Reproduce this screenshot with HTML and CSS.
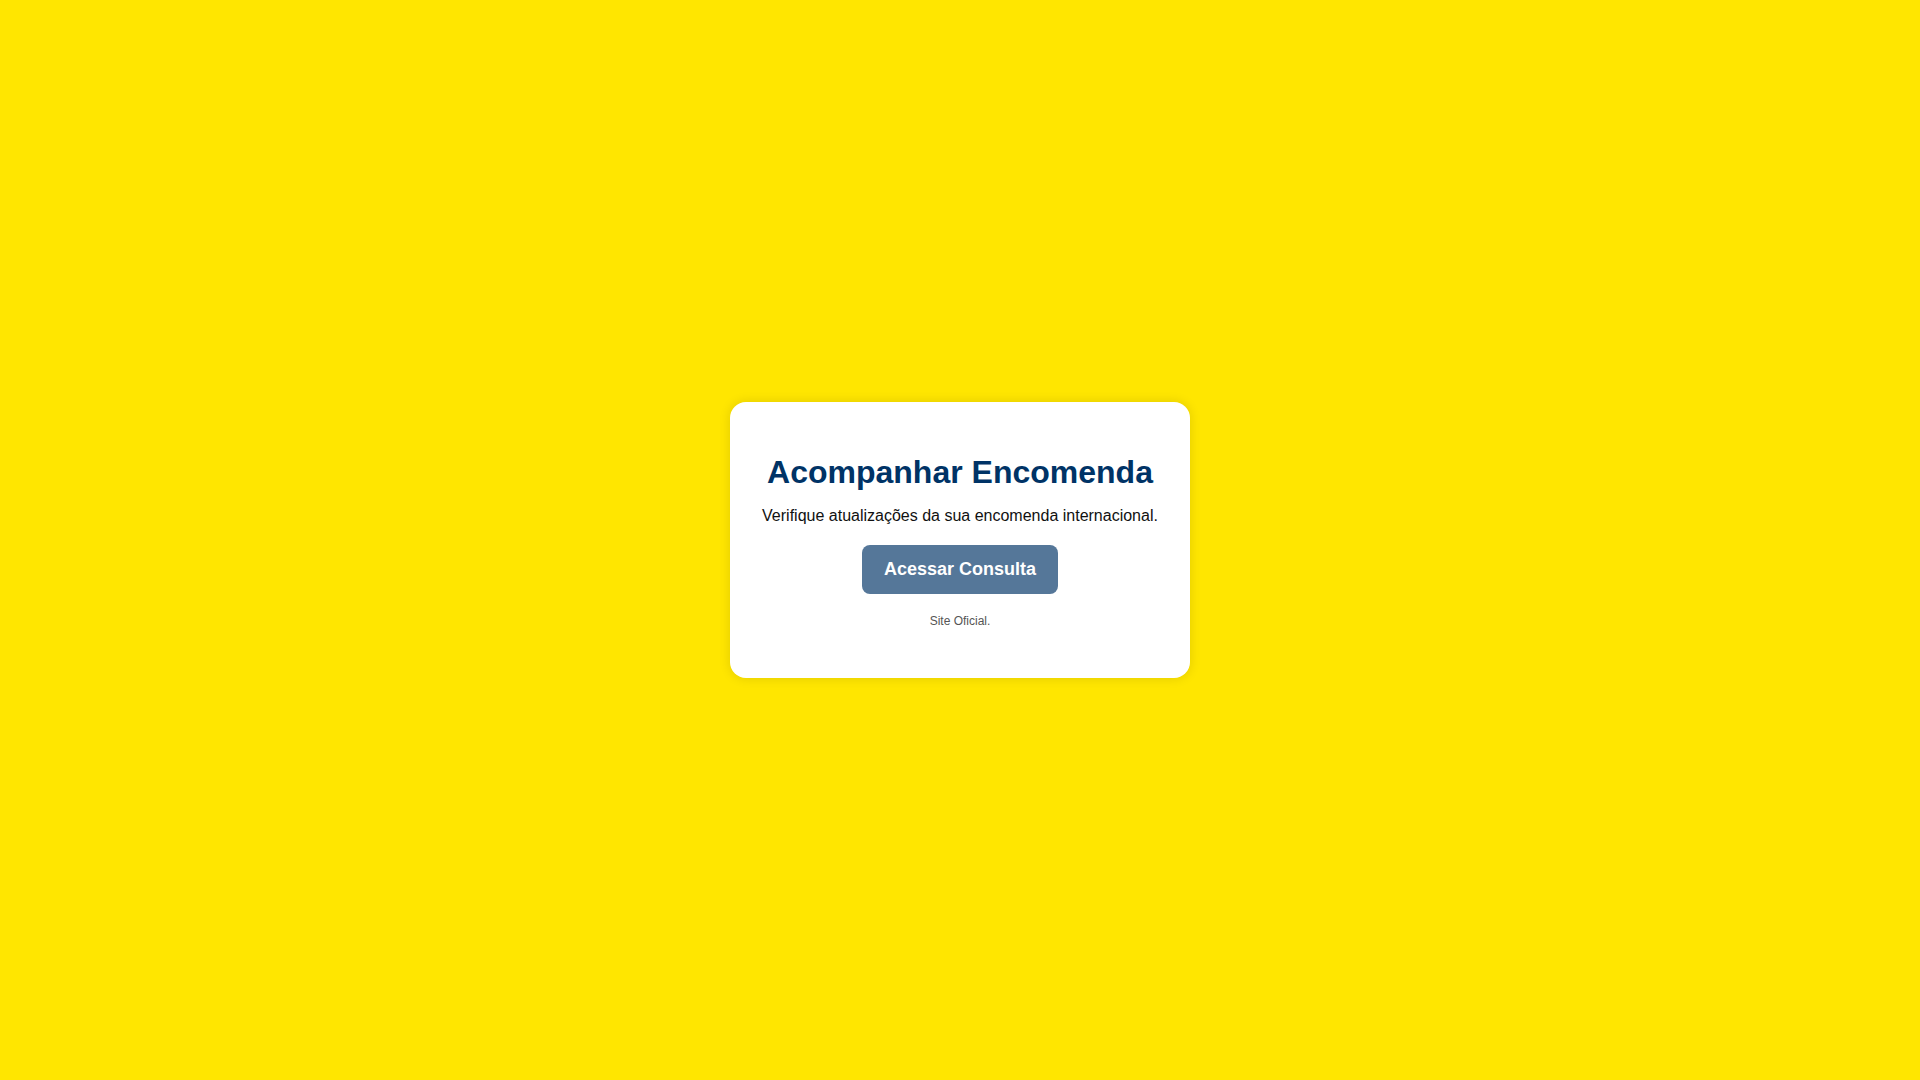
FILE: index.html
```html
<!DOCTYPE html>
<html lang="pt-BR">
<head>
<meta charset="utf-8">
<title>Acompanhar Encomenda</title>
<link rel="stylesheet" href="styles.css">
</head>
<body>
<main class="page">
  <section class="card">
    <h1 class="title">Acompanhar Encomenda</h1>
    <p class="subtitle">Verifique atualizações da sua encomenda internacional.</p>
    <a class="btn" href="#">Acessar Consulta</a>
    <p class="note">Site Oficial.</p>
  </section>
</main>
</body>
</html>
```
FILE: styles.css
```css
html, body {
  margin: 0;
  padding: 0;
  height: 100%;
}
body {
  background: #ffe600;
  font-family: "Liberation Sans", Arial, sans-serif;
}
.page {
  min-height: 100vh;
  display: flex;
  align-items: center;
  justify-content: center;
}
.card {
  width: 400px;
  padding: 30px;
  background: #ffffff;
  border-radius: 16px;
  box-shadow: 0 0 12px rgba(0, 0, 0, 0.12);
  text-align: center;
}
.title {
  margin: 22px 0 16px;
  font-size: 32px;
  font-weight: bold;
  color: #003366;
}
.subtitle {
  margin: 0 0 20px;
  font-size: 16px;
  color: #111111;
}
.btn {
  display: inline-block;
  padding: 14px 22px;
  background: #557799;
  color: #ffffff;
  font-size: 18px;
  font-weight: bold;
  text-decoration: none;
  border-radius: 8px;
}
.note {
  margin: 20px 0 20px;
  font-size: 12px;
  color: #555555;
}
```
